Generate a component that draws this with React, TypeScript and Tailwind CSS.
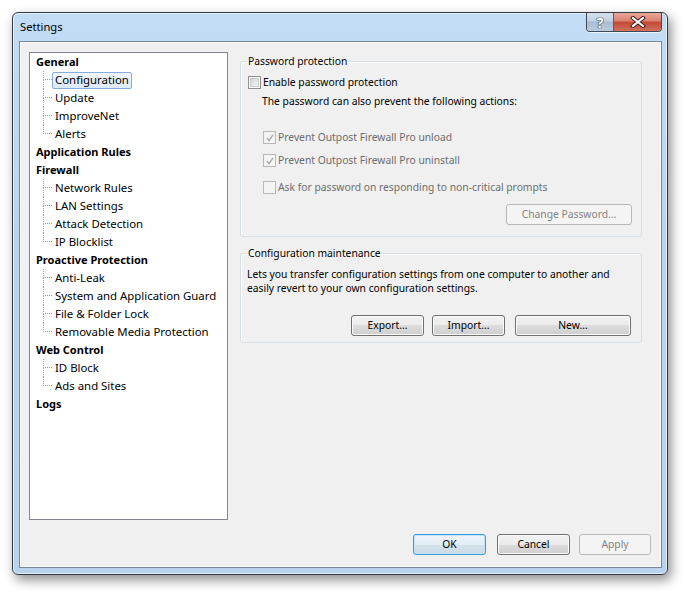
import React from "react";

const TREE = [
  { label: "General", children: ["Configuration", "Update", "ImproveNet", "Alerts"] },
  { label: "Application Rules", children: [] },
  { label: "Firewall", children: ["Network Rules", "LAN Settings", "Attack Detection", "IP Blocklist"] },
  {
    label: "Proactive Protection",
    children: ["Anti-Leak", "System and Application Guard", "File & Folder Lock", "Removable Media Protection"],
  },
  { label: "Web Control", children: ["ID Block", "Ads and Sites"] },
  { label: "Logs", children: [] },
];

function Button({
  children,
  className = "",
  variant = "normal",
}: {
  children: React.ReactNode;
  className?: string;
  variant?: "normal" | "default" | "disabled";
}) {
  const look =
    variant === "default"
      ? "border-[#3c9bd6] bg-[linear-gradient(180deg,#eef5fa_0%,#e3edf4_50%,#d4e2ec_50%,#cbdbe6_100%)] text-black shadow-[inset_0_0_0_1px_#bfe4fa]"
      : variant === "disabled"
        ? "border-[#b5b9bc] bg-[#f4f4f4] text-[#838383]"
        : "border-[#707070] bg-[linear-gradient(180deg,#f2f2f2_0%,#ebebeb_50%,#dddddd_50%,#cfcfcf_100%)] text-black shadow-[inset_0_0_0_1px_#fbfbfb]";
  return (
    <div className={`flex h-[21px] items-center justify-center rounded-[3px] border text-[10.3px] leading-none ${look} ${className}`}>
      {children}
    </div>
  );
}

function Check({ checked = false, disabled = false }: { checked?: boolean; disabled?: boolean }) {
  return (
    <span
      className={`relative flex h-[13px] w-[13px] shrink-0 items-center justify-center border ${
        disabled ? "border-[#b8b8b8] bg-[#f4f4f4]" : "border-[#8e8f8f] bg-white"
      }`}
    >
      <span
        className={`h-[9px] w-[9px] ${
          disabled
            ? "bg-[#f4f4f4]"
            : "border border-[#c9c9c9] bg-[linear-gradient(135deg,#d4d4d4,#f5f5f5)]"
        }`}
      />
      {checked && (
        <svg className="absolute left-[1px] top-[1px]" width="10" height="10" viewBox="0 0 10 10">
          <path d="M2 5.2 L4 7.6 L8 1.8" fill="none" stroke="#a8a8a8" strokeWidth="1.4" />
        </svg>
      )}
    </span>
  );
}

function Tree() {
  return (
    <div className="h-[468px] w-[199px] shrink-0 border border-[#828790] bg-white">
      {TREE.map((group) => (
        <div key={group.label}>
          <div className="flex h-[18px] items-center pl-[6px] text-[11px] font-bold text-black">{group.label}</div>
          {group.children.map((child, i) => {
            const last = i === group.children.length - 1;
            const selected = child === "Configuration";
            return (
              <div key={child} className="flex h-[18px] items-stretch pl-[13px]">
                <div className="flex w-[9px] flex-col">
                  <div className="h-[9px] border-b border-l border-dotted border-[#a0a0a0]" />
                  <div className={`flex-1 ${last ? "" : "border-l border-dotted border-[#a0a0a0]"}`} />
                </div>
                <div className="flex items-center">
                  <span
                    className={`flex h-[17px] items-center whitespace-nowrap rounded-[2px] border px-[2px] text-[11.4px] text-black ${
                      selected
                        ? "border-[#84acdd] bg-[linear-gradient(180deg,#f2f7fd,#dce9f8)]"
                        : "border-transparent"
                    }`}
                  >
                    {child}
                  </span>
                </div>
              </div>
            );
          })}
        </div>
      ))}
    </div>
  );
}

function Group({ title, children, className = "" }: { title: string; children: React.ReactNode; className?: string }) {
  return (
    <fieldset className={`w-[402px] rounded-[3px] border border-[#d5dfe5] shadow-[inset_1px_1px_0_#fff] ${className}`}>
      <legend className="ml-[6px] px-[1px] text-[10.3px] leading-[15px] text-black">{title}</legend>
      {children}
    </fieldset>
  );
}

function CaptionButtons() {
  return (
    <div className="mr-[5px] flex h-[19px] overflow-hidden rounded-b-[4px] border border-t-0 border-[#3d4a5a] shadow-[0_1px_0_rgba(255,255,255,0.7)]">
      <div className="flex w-[27px] items-center justify-center border-r border-[#4f5d6e] bg-[linear-gradient(180deg,#d3dfec_0%,#c1d1e3_45%,#a9bcd2_50%,#b8cbe0_100%)]">
        <span className="text-[15px] font-bold leading-none text-white [text-shadow:0_0_1px_#263547,0_0_1px_#263547,0_0_1px_#263547]">
          ?
        </span>
      </div>
      <div className="flex w-[47px] items-center justify-center bg-[linear-gradient(180deg,#e9a99b_0%,#d9816f_45%,#c24a36_50%,#d0705c_100%)]">
        <svg width="16" height="12" viewBox="0 0 16 12">
          <path d="M3 2 L13 10 M13 2 L3 10" stroke="#3b1410" strokeWidth="4" strokeLinecap="square" />
          <path d="M3 2 L13 10 M13 2 L3 10" stroke="#ffffff" strokeWidth="2.2" strokeLinecap="square" />
        </svg>
      </div>
    </div>
  );
}

export default function App() {
  return (
    <div className="h-[595px] w-[689px] overflow-hidden bg-white pl-[12px] pt-[12px] font-['Segoe_UI','Noto_Sans',sans-serif]">
      <div className="flex h-[563px] w-[656px] flex-col rounded-[6px] border border-[#343b44] bg-[linear-gradient(180deg,#c3dcf5_0%,#bad4f0_40%,#b9d3ee_100%)] shadow-[3px_5px_12px_rgba(0,0,0,0.45),inset_0_0_0_1px_rgba(255,255,255,0.55)]">
        <div className="flex h-[28px] shrink-0 items-start justify-between">
          <div className="flex h-[28px] items-center pl-[7px] text-[11.2px] text-black">Settings</div>
          <CaptionButtons />
        </div>
        <div className="ml-[6px] flex h-[527px] w-[643px] flex-col border border-[#7a8797] bg-[#f0f0f0] shadow-[inset_0_0_0_1px_#fafafa]">
          <div className="flex pl-[9px] pt-[10px]">
            <Tree />
            <div className="ml-[12px] pt-[2px]">
              <Group title="Password protection">
                <div className="pb-[11px] pl-[7px] pr-[9px] text-[10.3px] leading-[15px] text-black">
                  <div className="mt-[6px] flex items-center gap-[2px]">
                    <Check />
                    <span>Enable password protection</span>
                  </div>
                  <div className="mt-[4px] pl-[14px]">The password can also prevent the following actions:</div>
                  <div className="mt-[21px] flex items-center gap-[2px] pl-[15px] text-[#6d6d6d]">
                    <Check checked disabled />
                    <span>Prevent Outpost Firewall Pro unload</span>
                  </div>
                  <div className="mt-[8px] flex items-center gap-[2px] pl-[15px] text-[#6d6d6d]">
                    <Check checked disabled />
                    <span>Prevent Outpost Firewall Pro uninstall</span>
                  </div>
                  <div className="mt-[12px] flex items-center gap-[2px] pl-[15px] text-[#6d6d6d]">
                    <Check disabled />
                    <span>Ask for password on responding to non-critical prompts</span>
                  </div>
                  <div className="mt-[9px] flex justify-end">
                    <Button variant="disabled" className="w-[126px]">
                      Change Password...
                    </Button>
                  </div>
                </div>
              </Group>
              <Group title="Configuration maintenance" className="mt-[9px]">
                <div className="pb-[6px] pl-[6px] pr-[10px] text-[10.3px] text-black">
                  <p className="mt-[6px] whitespace-nowrap leading-[14px]">
                    Lets you transfer configuration settings from one computer to another and
                    <br />
                    easily revert to your own configuration settings.
                  </p>
                  <div className="mt-[20px] flex justify-end">
                    <Button className="w-[73px]">Export...</Button>
                    <Button className="ml-[8px] w-[73px]">Import...</Button>
                    <Button className="ml-[10px] w-[116px]">New...</Button>
                  </div>
                </div>
              </Group>
            </div>
          </div>
          <div className="mt-[14px] flex justify-end pr-[10px]">
            <Button variant="default" className="w-[73px]">
              OK
            </Button>
            <Button className="ml-[11px] w-[73px]">Cancel</Button>
            <Button variant="disabled" className="ml-[9px] w-[72px]">
              Apply
            </Button>
          </div>
        </div>
      </div>
    </div>
  );
}
